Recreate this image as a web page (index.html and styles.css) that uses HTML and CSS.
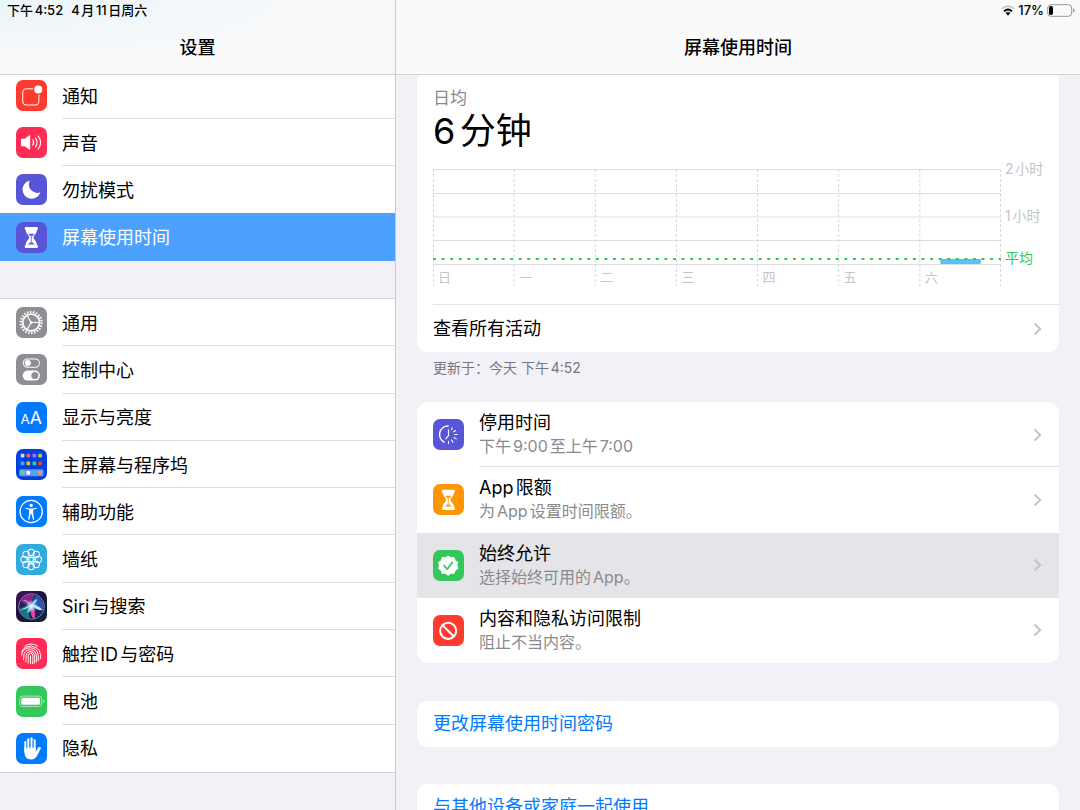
FILE: index.html
```html
<!DOCTYPE html>
<html lang="zh-CN">
<head>
<meta charset="utf-8">
<meta name="viewport" content="width=device-width, initial-scale=1">
<title>设置</title>
<link rel="stylesheet" href="styles.css">
</head>
<body>
<div class="app">
  <section class="pane sidebar">
    <header class="bar">
      <div class="status"><span>下午4:52</span><span>4月11日周六</span></div>
      <h1 class="title">设置</h1>
    </header>
    <nav class="scroll">
      <div class="group group-first">
        <a class="row" href="#notifications">
          <svg class="icon red" viewBox="0 0 92 92"><rect x="20" y="26" width="48" height="48" rx="11" fill="none" stroke="#fff" stroke-width="3"/><circle cx="66" cy="28" r="16" fill="#ff3b30"/><circle cx="66" cy="28" r="12" fill="#fff"/></svg>
          <span class="label">通知</span></a>
        <a class="row" href="#sounds">
          <svg class="icon pink" viewBox="0 0 92 92"><path d="M15 37q0-2 2-2h9l13-10q3-2 3 1v40q0 3-3 1L26 57h-9q-2 0-2-2z" fill="#fff"/><path d="M50 38q5 8 0 16M58 33q9 13 0 26M66 27q14 19 0 38" fill="none" stroke="#fff" stroke-width="3.4" stroke-linecap="round"/></svg>
          <span class="label">声音</span></a>
        <a class="row" href="#dnd">
          <svg class="icon purple" viewBox="0 0 92 92"><path d="M40 20a27 27 0 1 0 32 35q0-1-2 0A25 25 0 0 1 40 22z" fill="#fff"/></svg>
          <span class="label">勿扰模式</span></a>
        <a class="row selected" href="#screentime" aria-current="page">
          <svg class="icon purple" viewBox="0 0 92 92"><path d="M26 18q0-3 3-3h33q3 0 3 3v3q0 2-3 3c0 12-10 15-10 22s10 10 10 22q3 1 3 3v3q0 3-3 3H29q-3 0-3-3v-3q0-2 3-3c0-12 10-15 10-22S29 36 29 24q-3-1-3-3z" fill="#fff"/><path d="M36 35h19l-8 8v16l9 8H35l9-8V43z" fill="#5856d6"/><path d="M45.500 39v24" stroke="#fff" stroke-width="1"/></svg>
          <span class="label">屏幕使用时间</span></a>
      </div>
      <div class="group group-main">
        <a class="row" href="#general">
          <svg class="icon gray" viewBox="0 0 92 92"><g fill="none" stroke="#fff"><circle cx="45" cy="46" r="25" stroke-width="5"/><circle cx="45" cy="46" r="31" stroke-width="7" pathLength="44" stroke-dasharray="1 1"/><path d="M45 46h24M45 46L33 25M45 46L33 67" stroke-width="3.500"/></g><circle cx="45" cy="46" r="4" fill="#fff"/></svg>
          <span class="label">通用</span></a>
        <a class="row" href="#control">
          <svg class="icon gray" viewBox="0 0 92 92"><rect x="21.500" y="14.500" width="48" height="25" rx="12.500" fill="none" stroke="#fff" stroke-width="3"/><circle cx="35" cy="27" r="9" fill="#fff"/><rect x="20" y="49" width="51" height="30" rx="15" fill="#fff"/><circle cx="56" cy="64" r="10.500" fill="#8e8e93"/></svg>
          <span class="label">控制中心</span></a>
        <a class="row" href="#display">
          <svg class="icon blue" viewBox="0 0 92 92"><text class="glyph" x="13" y="65" font-size="40">A</text><text class="glyph" x="41" y="65" font-size="52">A</text></svg>
          <span class="label">显示与亮度</span></a>
        <a class="row" href="#home">
          <svg class="icon navy" viewBox="0 0 92 92"><rect x="9" y="60" width="73" height="21" rx="5" fill="#6c95f0"/><rect x="14" y="14" width="11" height="11" rx="2" fill="#cfd6e4"/><rect x="31" y="14" width="11" height="11" rx="2" fill="#ff4f6d"/><rect x="49" y="14" width="11" height="11" rx="2" fill="#b664f5"/><rect x="66" y="14" width="11" height="11" rx="2" fill="#b3d23b"/><rect x="14" y="37" width="11" height="11" rx="2" fill="#27b4f7"/><rect x="31" y="37" width="11" height="11" rx="2" fill="#ffb800"/><rect x="49" y="37" width="11" height="11" rx="2" fill="#36cf9a"/><rect x="66" y="37" width="11" height="11" rx="2" fill="#ff3434"/><rect x="14" y="65" width="11" height="11" rx="2" fill="#4be36b"/><rect x="31" y="65" width="11" height="11" rx="2" fill="#fff"/><rect x="49" y="65" width="11" height="11" rx="2" fill="#18c3ff"/><rect x="66" y="65" width="11" height="11" rx="2" fill="#ff9a3d"/></svg>
          <span class="label">主屏幕与程序坞</span></a>
        <a class="row" href="#accessibility">
          <svg class="icon blue" viewBox="0 0 92 92"><circle cx="45" cy="46" r="33" fill="none" stroke="#fff" stroke-width="4"/><circle cx="45" cy="28" r="5" fill="#fff"/><path d="M29 35l12 2h8l12-2q3 1 0 3l-10 3v10l3 18q-2 3-4 0l-4-16h-2l-4 16q-2 3-4 0l3-18V41l-10-3q-3-2 0-3z" fill="#fff"/></svg>
          <span class="label">辅助功能</span></a>
        <a class="row" href="#wallpaper">
          <svg class="icon cyan" viewBox="0 0 92 92"><g fill="none" stroke="#fff" stroke-width="3"><circle cx="45" cy="46" r="7"/><circle cx="45" cy="25" r="9.500"/><circle cx="60" cy="31" r="9.500"/><circle cx="66" cy="46" r="9.500"/><circle cx="60" cy="61" r="9.500"/><circle cx="45" cy="67" r="9.500"/><circle cx="30" cy="61" r="9.500"/><circle cx="24" cy="46" r="9.500"/><circle cx="30" cy="31" r="9.500"/><path d="M45 39v-8M45 53v8M38 46h-8M52 46h8M40 41l-6-6M50 41l6-6M40 51l-6 6M50 51l6 6" stroke-width="2.500"/></g></svg>
          <span class="label">墙纸</span></a>
        <a class="row" href="#siri">
          <svg class="icon siri" viewBox="0 0 92 92">
            <defs>
              <linearGradient id="siriBg" x1="0" y1="0" x2="1" y2="1"><stop offset="0" stop-color="#43165a"/><stop offset=".5" stop-color="#18143e"/><stop offset="1" stop-color="#10263f"/></linearGradient>
              <linearGradient id="siriRing" x1="0" y1="0" x2="1" y2="1"><stop offset="0" stop-color="#d07ad0"/><stop offset="1" stop-color="#58a8b8"/></linearGradient>
              <radialGradient id="siriGlow"><stop offset="0" stop-color="#fff"/><stop offset=".35" stop-color="#c7f0ff" stop-opacity=".8"/><stop offset="1" stop-color="#9be0ff" stop-opacity="0"/></radialGradient>
            </defs>
            <rect width="92" height="92" fill="url(#siriBg)"/>
            <circle cx="46" cy="46" r="38" fill="#1b2452" stroke="url(#siriRing)" stroke-width="2.500"/>
            <path d="M46 44C32 42 18 36 14 28 24 12 42 7 56 11 48 22 46 32 46 44z" fill="#a32a91" opacity=".8"/>
            <path d="M46 44C48 28 56 14 62 14 82 26 86 46 80 58 66 50 56 46 46 44z" fill="#3265d0" opacity=".75"/>
            <path d="M46 44C30 42 16 48 11 56 18 74 30 82 40 80 38 64 40 52 46 44z" fill="#168b96" opacity=".8"/>
            <path d="M46 42c10 12 14 26 8 42-10-8-14-26-8-42z" fill="#ef3fa2"/>
            <path d="M48 42C34 50 18 58 12 54c12-1 20-9 34-12z" fill="#b9fff2"/>
            <path d="M46 44c-10-8-20-16-26-16 8-4 20 4 26 16z" fill="#e873de"/>
            <path d="M46 42c14-2 24 4 33 15-12 1-22-5-33-15z" fill="#c8e3ff"/>
            <path d="M46 44c4-12 10-18 17-20 0 6-6 14-17 20zM46 44c0 10-5 18-13 22 2-8 5-16 13-22z" fill="#8ce6f0"/>
            <circle cx="46" cy="45" r="19" fill="url(#siriGlow)"/>
          </svg>
          <span class="label">Siri与搜索</span></a>
        <a class="row" href="#touchid">
          <svg class="icon pink" viewBox="0 0 92 92"><g fill="none" stroke="#fff" stroke-width="2.800" stroke-linecap="round"><path d="M26 24q19-13 38 0M17 41q3-10 13-14 15-7 29 1 12 7 14 21 1 7-1 13M17 51q0-17 18-21 18-4 27 9 7 11 4 29M22 65q2-7 1-13 2-15 17-17 14-1 19 11 4 11 1 26M29 70q2-9 1-17 1-11 12-13 11 0 13 11 2 12-1 24M36 74q2-11 0-21 1-7 8-8 6 1 6 9 1 12-1 22M43 76V53"/></g></svg>
          <span class="label">触控ID与密码</span></a>
        <a class="row" href="#battery">
          <svg class="icon green" viewBox="0 0 92 92"><rect x="11" y="30" width="65" height="31" rx="8" fill="none" stroke="#bdeccb" stroke-width="2.500"/><rect x="16" y="35" width="55" height="21" rx="4" fill="#fff"/><path d="M80 41q4 1 4 4.500t-4 4.500z" fill="#bdeccb"/></svg>
          <span class="label">电池</span></a>
        <a class="row" href="#privacy">
          <svg class="icon blue" viewBox="0 0 92 92"><g fill="none" stroke="#fff" stroke-width="6.500" stroke-linecap="round"><path d="M28 55V27M36.500 50V19M46 50V16M55 50V22"/></g><path d="M24.800 42h33.500v13q4-4 7-11 3-4 7-2 3 1 1 5L63 67Q57 79 45 79 25 79 24.800 56z" fill="#fff"/><path d="M32.200 27v19M41.300 22v23M50.600 22v23" stroke="#007aff" stroke-width="2"/></svg>
          <span class="label">隐私</span></a>
      </div>
      <div class="group"></div>
    </nav>
  </section>

  <main class="pane">
    <header class="bar bar-detail">
      <div class="status status-right">
        <svg class="wifi" viewBox="0 0 42 33" role="img" aria-label="Wi-Fi"><path d="M2 12Q21-5 40 12" fill="none" stroke="#c8c8c8" stroke-width="5"/><path d="M9 19Q21 8 33 19" fill="none" stroke="#000" stroke-width="5.500"/><path d="M14 24q7-6 14 0l-7 8z"/></svg>
        <span>17%</span>
        <svg class="battery" viewBox="0 0 84 39" role="img" aria-label="电池电量"><rect x="2" y="2" width="72" height="35" rx="10" fill="none" stroke="#9a9a9a" stroke-width="3"/><rect x="6" y="6" width="12" height="27" rx="5"/><path d="M78 13q5 2 5 6.500T78 26z" fill="#9a9a9a"/></svg>
      </div>
      <h2 class="title">屏幕使用时间</h2>
    </header>
    <div class="scroll content">
      <section class="card card-usage">
        <div class="usage">
          <div class="caption">日均</div>
          <div class="total">6分钟</div>
          <div class="chart">
            <div class="plot">
              <svg class="lines" aria-hidden="true">
                <g stroke="#dedee0" stroke-width="1"><path d="M0 .5H4000M0 24.500H4000M0 71.500H4000M0 95.500H4000"/><path d="M0 48H4000" stroke="#efeff0" stroke-width="2"/></g>
                <g class="dashes"><line x1="0.500" x2="0.500" y2="117"/><line x1="14.286%" x2="14.286%" y2="117"/><line x1="28.571%" x2="28.571%" y2="117"/><line x1="42.857%" x2="42.857%" y2="117"/><line x1="57.143%" x2="57.143%" y2="117"/><line x1="71.429%" x2="71.429%" y2="117"/><line x1="85.714%" x2="85.714%" y2="117"/><line x1="99.910%" x2="99.910%" y2="117"/></g>
                <rect x="89.300%" y="90" width="7.150%" height="5" rx="1" fill="#5ac0f8"/>
                <line class="average" x1="0" x2="100%" y1="90" y2="90"/>
              </svg>
              <span>日</span><span>一</span><span>二</span><span>三</span><span>四</span><span>五</span><span>六</span>
            </div>
            <div class="axis"><span>2小时</span><span>1小时</span><span class="avg">平均</span></div>
          </div>
        </div>
        <a class="activity" href="#activity"><span>查看所有活动</span><svg class="chevron" viewBox="0 0 9 14"><path d="M1.500 1.500L7.200 7l-5.700 5.500"/></svg></a>
      </section>
      <p class="note">更新于：今天 下午4:52</p>

      <section class="card options">
        <a class="option" href="#downtime">
          <svg class="icon purple" viewBox="0 0 92 92"><g fill="none" stroke="#fff" stroke-linecap="round"><path d="M45 20.500a25.500 25.500 0 0 0-12 48" stroke-width="4.500"/><path d="M46 32v17l-8 10" stroke-width="3.500"/><path d="M57 26l-2 5M67 34l-6 4M64 46h8M62 55l7 4M55 62l4 7M46 66v7" stroke-width="3.200"/></g></svg>
          <span class="option-text"><span class="name">停用时间</span><span class="detail">下午9:00至上午7:00</span></span><svg class="chevron" viewBox="0 0 9 14"><path d="M1.500 1.500L7.200 7l-5.700 5.500"/></svg></a>
        <a class="option" href="#limits">
          <svg class="icon orange" viewBox="0 0 92 92"><path d="M26 20q0-3 3-3h33q3 0 3 3v3q0 2-3 3c0 11-10 14-10 21s10 10 10 21q3 1 3 3v3q0 3-3 3H29q-3 0-3-3v-3q0-2 3-3c0-11 10-14 10-21S29 37 29 26q-3-1-3-3z" fill="#fff"/><path d="M36 35h19l-8 8v16l9 8H35l9-8V43z" fill="#ff9500"/><path d="M45.500 39v24" stroke="#fff" stroke-width="1"/></svg>
          <span class="option-text"><span class="name">App限额</span><span class="detail">为App设置时间限额。</span></span><svg class="chevron" viewBox="0 0 9 14"><path d="M1.500 1.500L7.200 7l-5.700 5.500"/></svg></a>
        <a class="option pressed" href="#allowed">
          <svg class="icon green" viewBox="0 0 92 92"><path d="M45 19l8 5 9-1 3 9 8 5-3 9 3 9-8 5-3 9-9-1-8 6-8-6-9 1-3-9-8-5 3-9-3-9 8-5 3-9 9 1z" fill="#fff" stroke="#fff" stroke-width="4" stroke-linejoin="round"/><path d="M33 46l9 11 15-20" fill="none" stroke="#34c759" stroke-width="5" stroke-linecap="round" stroke-linejoin="round"/></svg>
          <span class="option-text"><span class="name">始终允许</span><span class="detail">选择始终可用的App。</span></span><svg class="chevron" viewBox="0 0 9 14"><path d="M1.500 1.500L7.200 7l-5.700 5.500"/></svg></a>
        <a class="option" href="#restrictions">
          <svg class="icon red" viewBox="0 0 92 92"><g fill="none" stroke="#fff" stroke-width="6"><circle cx="45" cy="47" r="24"/><path d="M28 30l34 34"/></g></svg>
          <span class="option-text"><span class="name">内容和隐私访问限制</span><span class="detail">阻止不当内容。</span></span><svg class="chevron" viewBox="0 0 9 14"><path d="M1.500 1.500L7.200 7l-5.700 5.500"/></svg></a>
      </section>

      <button class="card action" type="button">更改屏幕使用时间密码</button>
      <button class="card action" type="button">与其他设备或家庭一起使用</button>
    </div>
  </main>
</div>
</body>
</html>
```

FILE: styles.css
```css
* {
  box-sizing: border-box;
}

body {
  margin: 0;
  background: #f2f1f7;
  color: #000;
  font: 18px/24px Inter, "Noto Sans CJK SC", sans-serif;
  text-autospace: normal;
}

a {
  color: inherit;
  text-decoration: none;
}

.app {
  display: grid;
  grid-template-columns: 11fr 19fr;
  height: 100vh;
}

.pane {
  display: flex;
  flex-direction: column;
  min-width: 0;
  min-height: 0;
}

.sidebar {
  border-right: 1px solid #c9c9cd;
}

.bar {
  flex: none;
  height: 75px;
  border-bottom: 1px solid #d2d2d4;
  background: radial-gradient(ellipse at 0 0, #eaf5fa, #f9f9fa 60%);
}

.bar-detail {
  background: #fafafb;
}

.status {
  display: flex;
  gap: 8px;
  height: 20px;
  padding: 0 7px;
  font-size: 13px;
  line-height: 20px;
  font-weight: 500;
}

.status-right {
  justify-content: flex-end;
  align-items: center;
  gap: 3px;
  padding-right: 5px;
}

.wifi {
  width: 14px;
  height: 11px;
}

.battery {
  width: 28px;
  height: 13px;
}

.title {
  margin: 0;
  padding-top: 16px;
  font-size: 18px;
  line-height: 24px;
  font-weight: 500;
  text-align: center;
}

.scroll {
  flex: 1;
  min-height: 0;
  overflow-y: auto;
  scrollbar-width: none;
}

.group {
  display: flex;
  flex-direction: column;
  margin-bottom: 37px;
  border-top: 1px solid #d4d4d8;
  background: #fff;
}

.group-first {
  height: 190px;
  margin-top: -4px;
}

.group-main {
  height: 475px;
  border-bottom: 1px solid #d4d4d8;
}

.row {
  display: flex;
  flex: 1;
  align-items: center;
  gap: 15px;
  padding-left: 16px;
}

.label {
  display: flex;
  flex: 1;
  align-items: center;
  align-self: stretch;
  padding-top: 3px;
  border-bottom: 1px solid #dcdcde;
}

.row:last-child .label,
.row:has(+ .selected) .label {
  border-color: transparent;
}

.selected {
  flex: 0 0 48px;
  background: #4ca1ff;
  color: #fff;
}

.icon {
  flex: none;
  width: 31px;
  height: 31px;
  border-radius: 7px;
}

.red { background: #ff3b30; }
.pink { background: #ff2d55; }
.purple { background: #5856d6; }
.gray { background: #8e8e93; }
.blue { background: #007aff; }
.navy { background: #0040dd; }
.cyan { background: #34aadc; }
.green { background: #34c759; }
.orange { background: #ff9500; }

.glyph {
  fill: #fff;
}

.content {
  padding: 0 21px;
}

.card {
  border-radius: 11px;
  background: #fff;
  overflow: hidden;
}

.card-usage {
  margin-top: -5px;
}

.usage {
  padding: 16px 0 17px 16px;
}

.caption {
  color: #8a8a8e;
  font-size: 17px;
}

.total {
  font-size: 36px;
  line-height: 42px;
}

.chart {
  display: flex;
  gap: 4px;
  height: 118px;
  margin-top: 17px;
}

.plot {
  position: relative;
  display: grid;
  flex: 1;
  grid-template-columns: repeat(7, 1fr);
  align-items: end;
  color: #c5c5c7;
  font-size: 13px;
  line-height: 20px;
}

.plot span {
  padding-left: 5px;
}

.lines {
  position: absolute;
  inset: 0;
  width: 100%;
  height: 100%;
}

.dashes {
  stroke: #d8d8da;
  stroke-width: 1;
  stroke-dasharray: 3 2;
}

.average {
  stroke: #34c759;
  stroke-width: 2;
  stroke-dasharray: 3 5.57;
}

.axis {
  display: flex;
  flex-direction: column;
  gap: 27px;
  width: 54px;
  margin-top: -10px;
  color: #c5c5c7;
  font-size: 14px;
  line-height: 20px;
}

.avg {
  margin-top: -5px;
  color: #34c759;
}

.activity {
  display: flex;
  align-items: center;
  justify-content: space-between;
  height: 48px;
  margin-left: 16px;
  padding-right: 17px;
  border-top: 1px solid #e4e4e6;
}

.chevron {
  flex: none;
  width: 9px;
  height: 14px;
  fill: none;
  stroke: #c4c4c7;
  stroke-width: 2;
}

.note {
  margin: 6px 16px 24px;
  color: #77777c;
  font-size: 14px;
  line-height: 20px;
}

.options {
  display: flex;
  flex-direction: column;
  height: 261px;
  margin-bottom: 38px;
}

.option {
  position: relative;
  display: flex;
  flex: 1;
  align-items: center;
  gap: 15px;
  padding: 0 17px 0 16px;
}

.option:first-child::after {
  position: absolute;
  right: 0;
  bottom: 0;
  left: 62px;
  height: 1px;
  background: #e0e0e2;
  content: "";
}

.option-text {
  display: flex;
  flex: 1;
  flex-direction: column;
  padding-bottom: 1px;
}

.detail {
  color: #8a8a8e;
  font-size: 16px;
  line-height: 22px;
}

.pressed {
  background: #e5e4e9;
}

.action {
  display: block;
  width: 100%;
  height: 46px;
  margin: 0 0 37px;
  padding: 0 16px;
  border: 0;
  color: #007aff;
  font: inherit;
  text-align: left;
}
```
